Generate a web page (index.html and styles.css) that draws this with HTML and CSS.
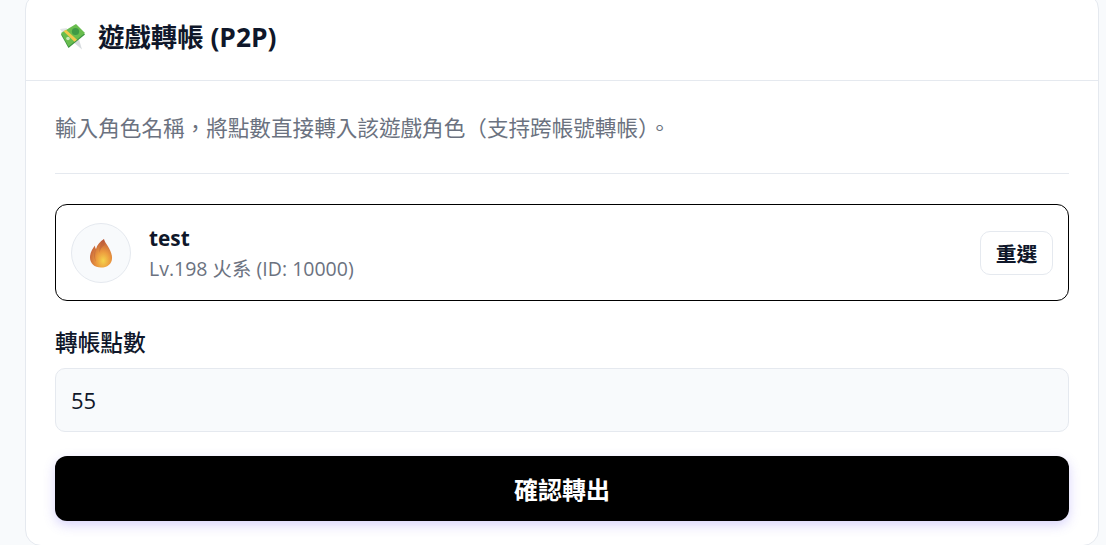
FILE: index.html
```html
<!DOCTYPE html>
<html lang="zh-Hant">
<head>
  <meta charset="utf-8">
  <title>遊戲轉帳</title>
  <link rel="stylesheet" href="styles.css">
</head>
<body>
  <div class="card">
    <div class="card-header">
      <svg class="money-icon" viewBox="0 0 28 28" width="28" height="28">
        <path d="M2 7 L9 6 L7 14 Z" fill="#e3e6e8"/>
        <path d="M14 19 L20 14 L24 27.500 Z" fill="#d8dcdf"/>
        <path d="M3 12.500 L18 3.500 L27 12.500 L10.500 26 Z" fill="#3c9440"/>
        <path d="M3 11 L18 2 L27 11 L10.500 24.500 Z" fill="#69bd4e"/>
        <circle cx="17.500" cy="9.500" r="3.600" fill="#3f9a45"/>
        <circle cx="10" cy="16.500" r="1.800" fill="#c9e8b8"/>
        <path d="M8 7.800 L19 17.800 L16.500 19.800 L5.500 9.300 Z" fill="#f2c94c"/>
      </svg>
      <h2>遊戲轉帳 (P2P)</h2>
    </div>
    <div class="card-body">
      <p class="desc">輸入角色名稱，將點數直接轉入該遊戲角色（支持跨帳號轉帳）。</p>
      <div class="divider"></div>
      <div class="selected-player">
        <div class="avatar">
          <svg viewBox="0 0 24 30" width="24" height="30">
            <defs>
              <radialGradient id="flame" cx="0.6" cy="0.76" r="0.7">
                <stop offset="0" stop-color="#f5d44c"/>
                <stop offset="0.45" stop-color="#ec9a3e"/>
                <stop offset="1" stop-color="#bf5c3c"/>
              </radialGradient>
            </defs>
            <path d="M15 1 C15.500 5 22.500 11 23 19 C23.500 25.500 18.500 29.500 12 29.500 C5.500 29.500 1 25.500 1 19.500 C1 14.500 3.500 10.500 6 7.500 C6 9 6.300 10 7 11 C8 7 11 3.500 15 1 Z" fill="url(#flame)"/>
            <path d="M7 11 C6 15 5.500 19 7 24 C4.500 20 4.500 15 7 11 Z M15 1 C11 6 10 10 10.500 15 C11 11 13 9 15.500 7 Z" fill="#b9583a" opacity="0.45"/>
          </svg>
        </div>
        <div class="player-info">
          <div class="player-name">test</div>
          <div class="player-meta">Lv.198 火系 (ID: 10000)</div>
        </div>
        <button class="reset-btn" type="button">重選</button>
      </div>
      <label class="field-label" for="amount">轉帳點數</label>
      <input class="field-input" id="amount" type="text" value="55">
      <button class="submit-btn" type="button">確認轉出</button>
    </div>
  </div>
</body>
</html>
```

FILE: styles.css
```css
html, body {
  height: 100%;
}
body {
  margin: 0;
  background: #f8fafc;
  font-family: "Open Sans", "Noto Sans CJK TC", sans-serif;
  color: #0f172a;
  overflow: hidden;
}
.card {
  box-sizing: border-box;
  width: 1074px;
  height: 553px;
  margin: -7px 0 0 25px;
  background: #fff;
  border: 1px solid #e5e9ef;
  border-radius: 16px;
}
.card-header {
  display: flex;
  align-items: center;
  gap: 12px;
  height: 87px;
  box-sizing: border-box;
  padding: 0 20px 3px 32px;
  border-bottom: 1px solid #e5e9ef;
}
.money-icon {
  flex: none;
}
.card-header h2 {
  margin: 0;
  font-size: 26.4px;
  font-weight: 700;
}
.card-body {
  display: flex;
  flex-direction: column;
  padding: 30px 29px 0;
}
.desc {
  margin: 0;
  height: 34px;
  line-height: 34px;
  font-size: 21.6px;
  color: #6b7280;
}
.divider {
  height: 1px;
  margin: 28px 0 30px;
  background: #e5e9ef;
}
.selected-player {
  display: flex;
  align-items: center;
  gap: 18px;
  box-sizing: border-box;
  height: 97px;
  padding: 0 15px;
  border: 1px solid #000;
  border-radius: 12px;
}
.avatar {
  display: flex;
  align-items: center;
  justify-content: center;
  box-sizing: border-box;
  width: 60px;
  height: 60px;
  border: 1px solid #e5e9ef;
  border-radius: 50%;
  background: #f8fafc;
}
.player-info {
  flex: 1;
}
.player-name {
  margin-top: 1px;
  font-size: 20.8px;
  font-weight: 700;
  line-height: 30px;
}
.player-meta {
  margin-top: 1px;
  font-size: 19.5px;
  line-height: 30px;
  color: #6b7280;
}
.reset-btn {
  box-sizing: border-box;
  width: 73px;
  height: 44px;
  padding: 0;
  border: 1px solid #e5e9ef;
  border-radius: 10px;
  background: #fff;
  font: 700 20.8px "Open Sans", "Noto Sans CJK TC", sans-serif;
  color: #0f172a;
}
.field-label {
  margin-top: 27px;
  height: 30px;
  line-height: 30px;
  font-size: 22.7px;
  font-weight: 500;
}
.field-input {
  box-sizing: border-box;
  height: 64px;
  margin-top: 10px;
  padding: 0 15px;
  border: 1px solid #e5e9ef;
  border-radius: 10px;
  background: #f8fafc;
  font: 400 22px "Open Sans", "Noto Sans CJK TC", sans-serif;
  color: #0f172a;
}
.submit-btn {
  height: 65px;
  margin-top: 24px;
  border: 0;
  border-radius: 12px;
  background: #000;
  color: #fff;
  font: 700 24px "Open Sans", "Noto Sans CJK TC", sans-serif;
  box-shadow: 0 4px 12px rgba(99, 80, 240, 0.25);
}
```
